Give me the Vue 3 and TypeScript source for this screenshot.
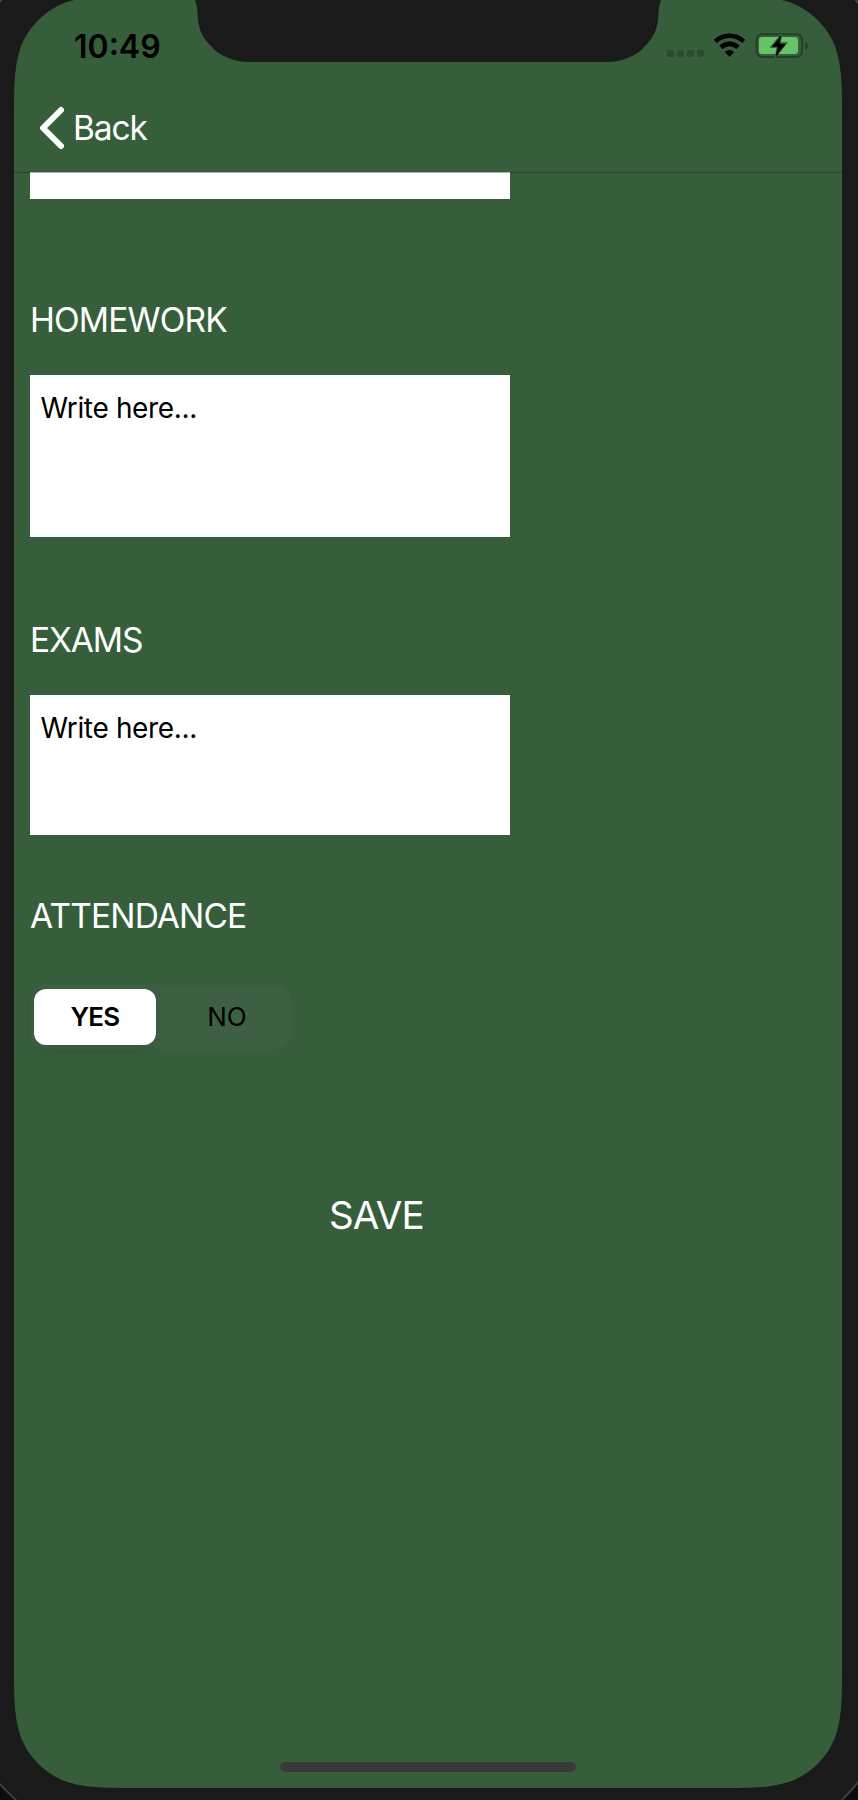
<script setup lang="ts">
import { ref } from 'vue'

interface Note {
  id: string
  title: string
  text: string
}

const notes = ref<Note[]>([
  { id: 'homework', title: 'HOMEWORK', text: 'Write here...' },
  { id: 'exams', title: 'EXAMS', text: 'Write here...' },
])

const options = ['YES', 'NO'] as const
const attendance = ref<(typeof options)[number]>('YES')
</script>

<template>
  <div class="device">
    <svg class="shell" width="858" height="1800" viewBox="0 0 858 1800" aria-hidden="true">
      <path
        class="screen-shape"
        d="M14 123 C14 86.300 14 68.100 20.200 48.400 C28 26.900 44.900 10 66.400 2.200 C86.100 -4 104.300 -4 141 -4 H715 C751.700 -4 769.900 -4 789.600 2.200 C811.100 10 828 26.900 835.800 48.400 C842 68.100 842 86.300 842 123 V1661 C842 1697.700 842 1715.900 835.800 1735.600 C828 1757.100 811.100 1774 789.600 1781.800 C769.900 1788 751.700 1788 715 1788 H141 C104.300 1788 86.100 1788 66.400 1781.800 C44.900 1774 28 1757.100 20.200 1735.600 C14 1715.900 14 1697.700 14 1661 Z"
      />
      <path
        class="notch"
        d="M194 -1 C196.500 2.500 197.200 7 197.500 13 C198 27 201 35 209 44 C219 56 233 62 251 62 H605 C623 62 637 56 647 44 C655 35 658 27 658.500 13 C658.800 7 659.500 2.500 662 -1 Z"
      />
      <path class="beyond" d="M-2 1782 Q7 1792 18 1802 H-2 Z M860 1780 Q851 1791 840 1802 H860 Z" />
      <path class="edge" d="M-1 2 L2 -1 M855 -1 L859 4" />
    </svg>

    <header class="status">
      <span class="clock">10:49</span>
      <svg class="indicators" width="144" height="28" viewBox="0 0 144 28" aria-hidden="true">
        <g class="signal">
          <rect x="1" y="18" width="7" height="7" rx="1.800" />
          <rect x="11" y="18" width="7" height="7" rx="1.800" />
          <rect x="21" y="18" width="7" height="7" rx="1.800" />
          <rect x="31" y="18" width="7" height="7" rx="1.800" />
        </g>
        <g class="wifi">
          <path d="M49.300 9.400 C57.500 1.800 69.500 1.800 77.700 9.400" />
          <path d="M54.900 15.300 C60 10.700 67 10.700 72.100 15.300" />
          <path class="wifi-dot" d="M58.900 20 Q63.500 16.200 68.100 20 L63.500 25 Z" />
        </g>
        <rect class="battery" x="90.500" y="2.300" width="45.500" height="22.700" rx="5.500" />
        <rect class="charge" x="93" y="5" width="39" height="17" rx="3" />
        <path class="nub" d="M139 9.500 Q142 11 142 13.500 Q142 16.500 139 18 Z" />
        <path class="bolt-gap" d="M115.500 2 L104 15.300 H111 L109 25.500 L121.500 10.500 H114.500 Z" />
        <path class="bolt" d="M115 3.500 L106 14.800 H112 L110 24 L119.500 12 H113.500 Z" />
      </svg>
    </header>

    <nav class="nav">
      <svg width="26" height="44" viewBox="0 0 26 44" aria-hidden="true">
        <path class="chevron" d="M23 4 L5 22 L23 40" />
      </svg>
      <span class="back">Back</span>
    </nav>

    <main class="form">
      <div class="field scrolled"></div>
      <section v-for="note in notes" :key="note.id" class="group" :class="note.id">
        <h2 class="label">{{ note.title }}</h2>
        <div class="field">{{ note.text }}</div>
      </section>
      <section class="group attendance">
        <h2 class="label">ATTENDANCE</h2>
        <div class="segments">
          <button
            v-for="option in options"
            :key="option"
            type="button"
            class="segment"
            :class="{ active: attendance === option }"
            @click="attendance = option"
          >{{ option }}</button>
        </div>
      </section>
      <button type="button" class="save">SAVE</button>
    </main>

    <div class="home"></div>
  </div>
</template>

<style>
body {
  margin: 0;
  background: #1a1a1a;
}
</style>

<style scoped>
.device {
  position: relative;
  box-sizing: border-box;
  width: 858px;
  height: 1800px;
  padding: 0 16px 28px 14px;
  display: flex;
  flex-direction: column;
  overflow: hidden;
  background: #1a1a1a;
  font-family: Inter, "Liberation Sans", sans-serif;
  color: #fff;
}
.shell {
  position: absolute;
  top: 0;
  left: 0;
}
.screen-shape { fill: #365e3b; }
.notch { fill: #1a1a1a; }
.beyond { fill: #0c0c0c; stroke: #3d3d3d; stroke-width: 2; }
.edge { fill: none; stroke: #484848; stroke-width: 2; }
.status,
.nav,
.form,
.home {
  position: relative;
}
.status {
  height: 84px;
  display: flex;
  justify-content: space-between;
  box-sizing: border-box;
  padding: 32px 32px 0 60px;
  color: #000;
}
.clock {
  height: 28px;
  line-height: 29px;
  font-size: 32px;
  font-weight: 600;
}
.signal { fill: #2b4b2f; }
.wifi { fill: none; stroke: #000; stroke-width: 4.600; }
.wifi .wifi-dot { fill: #000; stroke: none; }
.battery { fill: none; stroke: #263f29; stroke-width: 2; }
.charge { fill: #67c466; }
.nub { fill: #263f29; }
.bolt-gap { fill: #3c7040; stroke: #3c7040; stroke-width: 1; }
.bolt { fill: #000; stroke: #000; stroke-width: 0.5; }
.nav {
  width: 828px;
  height: 89px;
  box-sizing: border-box;
  border-bottom: 1px solid #27432a;
  display: flex;
  align-items: center;
  gap: 9px;
  padding: 0 0 0 24px;
}
.chevron {
  fill: none;
  stroke: #fff;
  stroke-width: 6;
  stroke-linecap: round;
  stroke-linejoin: round;
}
.back {
  font-size: 33.5px;
  line-height: 40px;
  letter-spacing: -1.1px;
}
.form {
  flex: 1;
  display: flex;
  flex-direction: column;
  align-items: flex-start;
  padding-left: 16px;
}
.field {
  box-sizing: border-box;
  width: 480px;
  padding: 16px 10.5px;
  background: #fff;
  color: #000;
  font-size: 28px;
  line-height: 34px;
  letter-spacing: -0.35px;
}
.scrolled {
  height: 27px;
  margin-top: -1px;
  padding: 0;
  border-top: 1px solid #b2b2b2;
}
.group {
  display: flex;
  flex-direction: column;
}
.label {
  margin: 0;
  font-size: 33.5px;
  font-weight: 400;
  line-height: 41px;
  letter-spacing: -0.85px;
}
.homework { margin-top: 101px; gap: 34px; }
.homework .field { height: 162px; }
.exams { margin-top: 83px; gap: 34px; }
.exams .label { letter-spacing: -1.1px; }
.exams .field { height: 140px; }
.attendance { margin-top: 61px; gap: 48px; }
.segments {
  display: flex;
  gap: 10px;
  box-sizing: border-box;
  width: 262px;
  height: 64px;
  padding: 4px;
  border-radius: 16px;
  background: #3d6042;
}
.segment,
.save {
  border: 0;
  padding: 0;
  background: none;
  font-family: inherit;
}
.segment {
  flex: none;
  width: 122px;
  height: 56px;
  border-radius: 12px;
  font-size: 26px;
  line-height: 56px;
  color: #000;
}
.segment.active {
  background: #fff;
  font-weight: 600;
  letter-spacing: -0.8px;
  box-shadow: 0 4px 10px rgba(0, 0, 0, 0.08);
}
.save {
  margin: 143px 0 0 299px;
  color: #fff;
  font-size: 38.5px;
  line-height: 46px;
  letter-spacing: -0.9px;
}
.home {
  width: 296px;
  height: 10px;
  margin-left: 266px;
  border-radius: 5px;
  background: #3a3a3a;
}
</style>
